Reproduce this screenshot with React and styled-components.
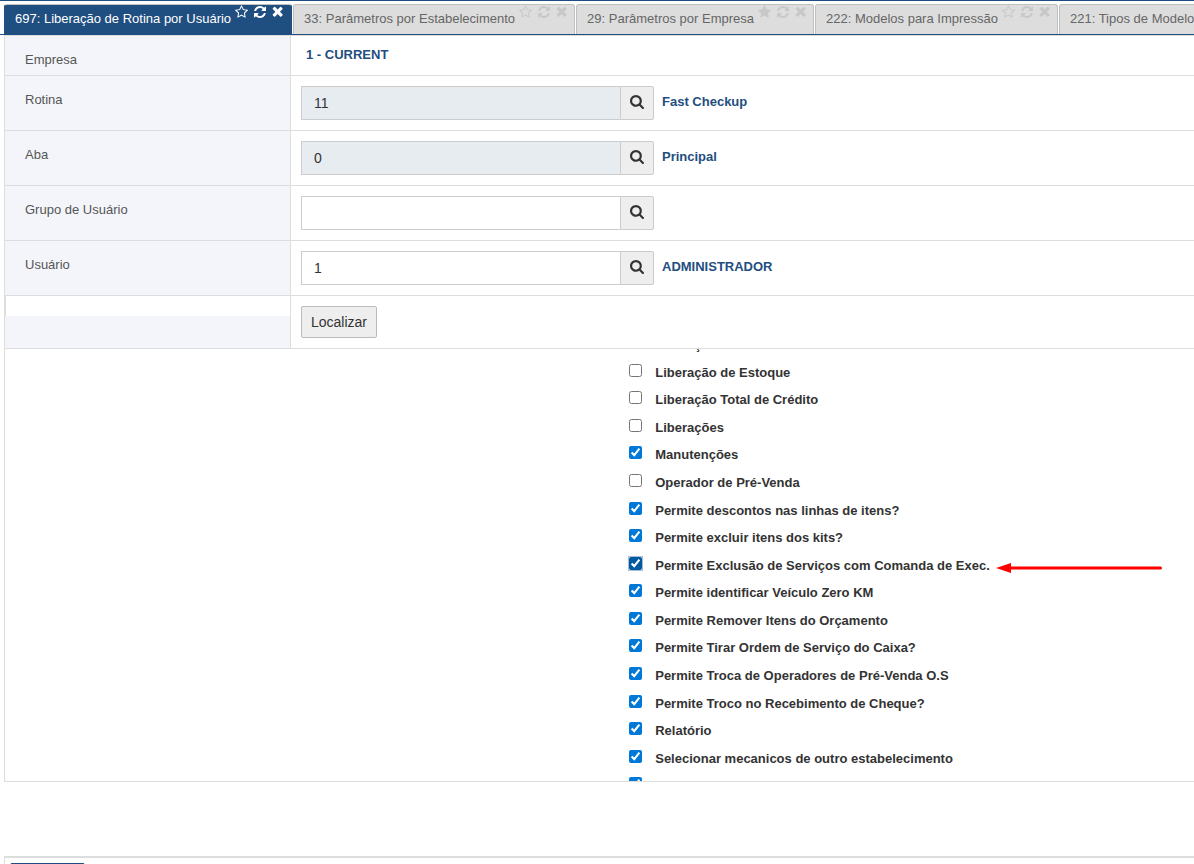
import React, { useLayoutEffect, useRef } from "react";
import styled, { createGlobalStyle } from "styled-components";

const icons = {
  starOutline: {
    box: "0 0 1664 1792",
    path: "M1137 1004l306-297-422-62-189-382-189 382-422 62 306 297-73 421 378-199 377 199zm527-357q0 22-26 48l-363 354 86 500q1 7 1 20 0 50-41 50-19 0-40-12l-449-236-449 236q-22 12-40 12-21 0-31.5-14.5t-10.5-35.5q0-6 2-20l86-500-364-354q-25-27-25-48 0-37 56-46l502-73 225-455q19-41 49-41t49 41l225 455 502 73q56 9 56 46z",
  },
  star: {
    box: "0 0 1664 1792",
    path: "M1664 647q0 22-26 48l-363 354 86 500q1 7 1 20 0 50-41 50-19 0-40-12l-449-236-449 236q-22 12-40 12-21 0-31.5-14.5t-10.5-35.5q0-6 2-20l86-500-364-354q-25-27-25-48 0-37 56-46l502-73 225-455q19-41 49-41t49 41l225 455 502 73q56 9 56 46z",
  },
  refresh: {
    box: "0 0 1536 1792",
    path: "M1511 1056q0 5-1 7-64 268-268 434.5t-478 166.5q-146 0-282.5-55t-243.5-157l-129 129q-19 19-45 19t-45-19-19-45v-448q0-26 19-45t45-19h448q26 0 45 19t19 45-19 45l-137 137q71 66 161 102t187 36q134 0 250-65t186-179q11-17 53-117 8-23 30-23h192q13 0 22.500 9.500t9.500 22.500zm25-800v448q0 26-19 45t-45 19h-448q-26 0-45-19t-19-45 19-45l138-138q-148-137-349-137-134 0-250 65t-186 179q-11 17-53 117-8 23-30 23h-199q-13 0-22.500-9.500t-9.500-22.500v-7q65-268 270-434.500t480-166.500q146 0 284 55.500t245 156.500l130-129q19-19 45-19t45 19 19 45z",
  },
  close: {
    box: "30 150 1308 1664",
    path: "M1298 1322q0 40-28 68l-136 136q-28 28-68 28t-68-28l-294-294-294 294q-28 28-68 28t-68-28l-136-136q-28-28-28-68t28-68l294-294-294-294q-28-28-28-68t28-68l136-136q28-28 68-28t68 28l294 294 294-294q28-28 68-28t68 28l136 136q28 28 28 68t-28 68l-294 294 294 294q28 28 28 68z",
  },
  search: {
    box: "0 128 1664 1664",
    path: "M1152 832q0-185-131.500-316.500t-316.500-131.500-316.500 131.500-131.500 316.500 131.500 316.500 316.500 131.500 316.500-131.500 131.500-316.500zm512 832q0 52-38 90t-90 38q-54 0-90-38l-343-342q-179 124-399 124-143 0-273.500-55.500t-225-150-150-225-55.500-273.500 55.500-273.500 150-225 225-150 273.500-55.500 273.500 55.500 225 150 150 225 55.500 273.500q0 220-124 399l343 343q37 37 37 90z",
  },
};

const tabs = [
  { title: "697: Liberação de Rotina por Usuário", active: true },
  { title: "33: Parâmetros por Estabelecimento" },
  { title: "29: Parâmetros por Empresa", favorite: true },
  { title: "222: Modelos para Impressão" },
  { title: "221: Tipos de Modelos" },
];

const fields = [
  { id: "rotina", label: "Rotina", value: "11", text: "Fast Checkup", locked: true },
  { id: "aba", label: "Aba", value: "0", text: "Principal", locked: true },
  { id: "grupo", label: "Grupo de Usuário", value: "", text: "" },
  { id: "usuario", label: "Usuário", value: "1", text: "ADMINISTRADOR" },
];

const permissions = [
  { name: "Liberação", checked: false },
  { name: "Liberação de Estoque", checked: false },
  { name: "Liberação Total de Crédito", checked: false },
  { name: "Liberações", checked: false },
  { name: "Manutenções", checked: true },
  { name: "Operador de Pré-Venda", checked: false },
  { name: "Permite descontos nas linhas de itens?", checked: true },
  { name: "Permite excluir itens dos kits?", checked: true },
  { name: "Permite Exclusão de Serviços com Comanda de Exec.", checked: true, marked: true },
  { name: "Permite identificar Veículo Zero KM", checked: true },
  { name: "Permite Remover Itens do Orçamento", checked: true },
  { name: "Permite Tirar Ordem de Serviço do Caixa?", checked: true },
  { name: "Permite Troca de Operadores de Pré-Venda O.S", checked: true },
  { name: "Permite Troco no Recebimento de Cheque?", checked: true },
  { name: "Relatório", checked: true },
  { name: "Selecionar mecanicos de outro estabelecimento", checked: true },
  { name: "Selecionar vendedores de outro estabelecimento", checked: true },
];

const Icon = ({ name }) => (
  <Glyph viewBox={icons[name].box} aria-hidden="true">
    <path d={icons[name].path} />
  </Glyph>
);

const Tab = ({ title, active, favorite }) => (
  <TabItem $active={active}>
    <TabLink href="#">{title}</TabLink>
    <TabTools>
      <TabButton type="button" aria-label="Favorito">
        <Icon name={favorite ? "star" : "starOutline"} />
      </TabButton>
      <TabButton type="button" aria-label="Atualizar">
        <Icon name="refresh" />
      </TabButton>
      <TabButton type="button" aria-label="Fechar">
        <Icon name="close" />
      </TabButton>
    </TabTools>
  </TabItem>
);

const Field = ({ id, label, value, text, locked }) => (
  <Row>
    <LabelCell>
      <label htmlFor={id}>{label}</label>
    </LabelCell>
    <ValueCell>
      <SearchGroup>
        <TextInput id={id} defaultValue={value} readOnly={locked} $locked={locked} />
        <SearchButton type="button" aria-label={`Pesquisar ${label}`}>
          <Icon name="search" />
        </SearchButton>
      </SearchGroup>
      <Description>{text}</Description>
    </ValueCell>
  </Row>
);

const App = () => {
  const list = useRef(null);

  useLayoutEffect(() => {
    list.current.scrollTop = 18;
  }, []);

  return (
    <Page>
      <GlobalStyle />
      <TabBar>
        {tabs.map((tab) => (
          <Tab key={tab.title} {...tab} />
        ))}
      </TabBar>
      <Panel>
        <Row>
          <LabelCell>Empresa</LabelCell>
          <CompanyCell>1 - CURRENT</CompanyCell>
        </Row>
        {fields.map((field) => (
          <Field key={field.id} {...field} />
        ))}
        <Row>
          <EmptyCell>
            <EmptyLabel />
          </EmptyCell>
          <ValueCell>
            <FindButton type="button">Localizar</FindButton>
          </ValueCell>
        </Row>
        <Scroller ref={list}>
          <PermissionList>
            {permissions.map(({ name, checked, marked }) => (
              <Permission key={name}>
                <PermissionLabel>
                  <Check type="checkbox" defaultChecked={checked} $marked={marked} />
                  <PermissionName>{name}</PermissionName>
                </PermissionLabel>
                {marked && (
                  <Arrow viewBox="0 0 166 10" aria-hidden="true">
                    <path d="M0 5L15 0V10Z" />
                    <path d="M14 3.500H164.500a1.500 1.500 0 0 1 0 3H14Z" />
                  </Arrow>
                )}
              </Permission>
            ))}
          </PermissionList>
        </Scroller>
      </Panel>
      <Footer>
        <SaveButton type="button" aria-label="Gravar" />
      </Footer>
    </Page>
  );
};

export default App;

const GlobalStyle = createGlobalStyle`
  * {
    box-sizing: border-box;
  }
  body {
    margin: 0;
    background: #fff;
    color: #333;
    font-family: "Liberation Sans", Arial, sans-serif;
    font-size: 13px;
    line-height: 20px;
  }
  button, input {
    font-family: inherit;
  }
`;

const Page = styled.div`
  height: 100vh;
  overflow: hidden;
  border-top: 1px solid #1f4e80;
`;

const TabBar = styled.ul`
  display: flex;
  gap: 1px;
  margin: 0;
  padding: 3px 0 0 4px;
  list-style: none;
  overflow: hidden;
  border-bottom: 1px solid #1f4e80;
`;
const TabItem = styled.li`
  display: flex;
  flex-shrink: 0;
  gap: 4px;
  height: 30px;
  padding: 0 ${(props) => (props.$active ? "8px" : "7px")} 0 10px;
  border: 1px solid ${(props) => (props.$active ? "#1f4e80" : "#c0c0c0")};
  border-top-color: #c0c0c0;
  border-bottom: none;
  border-radius: 3px 3px 0 0;
  background: ${(props) => (props.$active ? "#1f4e80" : "#ddd")};
  color: ${(props) => (props.$active ? "#fff" : "#666")};
  --tool: ${(props) => (props.$active ? "#fff" : "#c8c8c8")};
`;
const TabLink = styled.a`
  padding-top: 4px;
  color: inherit;
  text-decoration: none;
  white-space: nowrap;
`;
const TabTools = styled.div`
  display: flex;
  align-items: flex-start;
  gap: 6px;
`;
const TabButton = styled.button`
  display: flex;
  padding: 0;
  border: none;
  background: none;
  color: var(--tool);
  cursor: pointer;
`;
const Glyph = styled.svg`
  display: block;
  height: 14px;
  fill: currentColor;
`;

const Panel = styled.form`
  margin-left: 4px;
  border: 1px solid #ddd;
  border-right: none;
`;
const Row = styled.div`
  display: grid;
  grid-template-columns: 286px 1fr;
  border-bottom: 1px solid #ddd;
`;
const LabelCell = styled.div`
  padding: 14px 20px 5px;
  border-right: 1px solid #ddd;
  background: #f4f5fa;
  color: #555;
`;
const EmptyCell = styled.div`
  border-right: 1px solid #ddd;
  background: #f4f5fa;
`;
const EmptyLabel = styled.div`
  height: 20px;
  border-left: 1px solid #ddd;
  background: #fff;
`;
const ValueCell = styled.div`
  display: flex;
  gap: 8px;
  padding: 10px;
`;
const CompanyCell = styled.div`
  padding: 9px 15px;
  color: #1f4e80;
  font-weight: bold;
`;
const SearchGroup = styled.div`
  display: flex;
  width: 353px;
  height: 34px;
`;
const TextInput = styled.input`
  flex: 1;
  min-width: 0;
  padding: 0 12px;
  border: 1px solid #ccc;
  border-right: none;
  border-radius: 0;
  outline: none;
  background: ${(props) => (props.$locked ? "#e7ecf0" : "#fff")};
  color: #333;
  font-size: 14px;
`;
const SearchButton = styled.button`
  display: flex;
  width: 34px;
  padding: 8px 0 0 9px;
  border: 1px solid #ccc;
  border-radius: 0 2px 2px 0;
  background: #eee;
  color: #333;
  cursor: pointer;
`;
const Description = styled.span`
  padding-top: 6px;
  color: #1f4e80;
  font-weight: bold;
`;
const FindButton = styled.button`
  height: 32px;
  padding: 0 9px;
  border: 1px solid #bbb;
  border-radius: 2px;
  background: #eee;
  color: #333;
  font-size: 14px;
  cursor: pointer;
`;

const Scroller = styled.div`
  max-height: 432px;
  overflow-y: auto;
  scrollbar-width: none;
`;
const PermissionList = styled.ul`
  display: grid;
  grid-template-rows: repeat(17, 1fr);
  height: 469px;
  margin: 0;
  padding: 0 0 0 52.5%;
  list-style: none;
`;
const Permission = styled.li`
  display: flex;
  align-items: flex-start;
  gap: 6px;
  padding-top: 4px;
`;
const PermissionLabel = styled.label`
  display: flex;
  gap: 13px;
  white-space: nowrap;
`;
const Check = styled.input`
  width: 13px;
  height: 13px;
  margin: 1px 0 0;
  border-radius: 2px;
  accent-color: ${(props) => (props.$marked ? "#005a9e" : "#0078d7")};
  box-shadow: ${(props) => (props.$marked ? "0 0 0 1px #a9bddb" : "none")};
`;
const PermissionName = styled.span`
  font-weight: bold;
`;
const Arrow = styled.svg`
  flex-shrink: 0;
  width: 166px;
  height: 10px;
  margin-top: 7px;
  fill: #f00;
`;

const Footer = styled.div`
  margin: 74px 0 0 4px;
  padding: 5px;
  border-top: 2px solid #ddd;
  border-left: 1px solid #ddd;
`;
const SaveButton = styled.button`
  width: 75px;
  height: 32px;
  border: 1px solid #1f4e80;
  border-radius: 2px;
  background: #1f4e80;
`;
